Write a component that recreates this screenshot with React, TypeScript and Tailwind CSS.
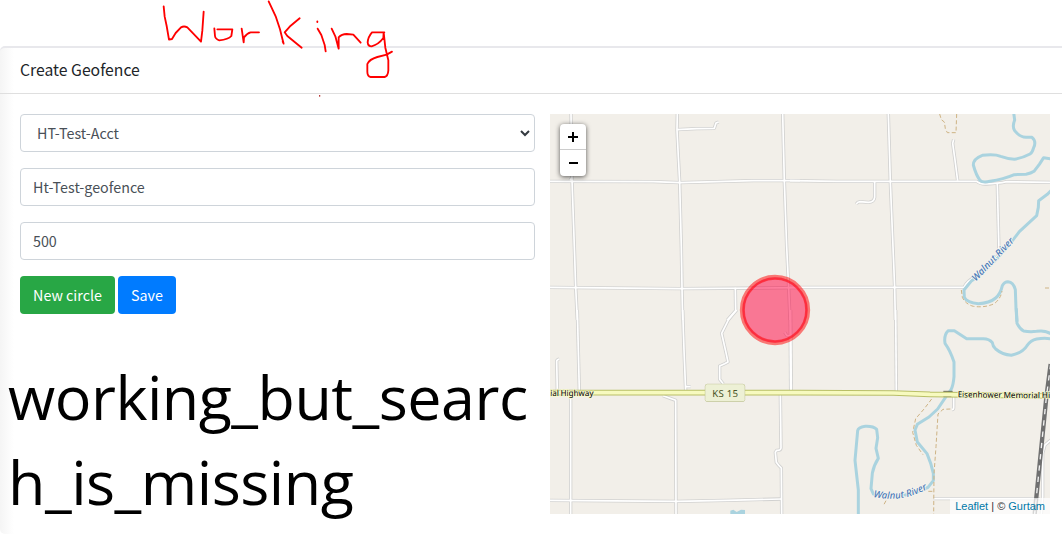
type Layer = { transform: string; roads: string[]; rivers: string[]; trails: string[] };

// One entry per map tile, at three units to a pixel
const layers: Layer[] = [
  {
    transform: "translate(-30 -42)",
    roads: [
      "M93 42L96 240L103 440L107 560L112 660",
      "M412 42L411 90L415 170L419 246L424 440L426 565L428 660",
      "M411 89L470 86L523 85L528 69L536 66",
      "M728 42L733 242L740 440L746 563L750 660",
      "M30 244L340 245L420 248L640 242L780 242",
      "M30 562L420 566L780 563",
      "M96 232L90 241",
      "M586 563L587 632L562 660",
    ],
    rivers: [],
    trails: [],
  },
  {
    transform: "translate(720 -42)",
    roads: [
      "M0 242L140 244L560 244Q570 253 590 252Q625 251 650 245L780 247",
      "M295 42L301 245L309 440L314 563L316 660",
      "M254 245V292Q252 307 235 307L210 305Q202 306 199 312",
      "M491 118L488 130L495 180L503 242",
      "M622 252L627 458",
      "M0 562L522 562Q532 542 554 532L590 507L627 462",
    ],
    rivers: [
      "M671 38L674 60Q666 80 674 92Q690 112 708 112H726Q740 124 731 143Q727 158 720 162Q700 173 673 178Q655 177 632 169Q615 162 577 166Q550 176 550 195Q558 225 570 241Q578 249 600 244Q640 238 673 224Q695 223 708 223Q723 220 732 214L748 193L761 173L785 177",
      "M785 270L772 283L746 302L745 322L740 347L688 395L665 425L620 477L575 521L545 542L522 570L523 592Q530 607 565 611Q598 610 617 594Q632 581 637 557Q643 545 654 545Q670 546 676 569L678 625L681 665",
    ],
    trails: ["M449 42L454 59L463 66L466 86L472 98H498L500 42", "M514 570L517 592Q526 612 550 619Q584 624 613 611Q633 595 636 573", "M765 564H785"],
  },
  {
    transform: "translate(-30 588)",
    roads: [
      "M112 0L118 244",
      "M428 0L432 120L437 242M437 230H452",
      "M52 244L50 154Q50 149 58 147",
      "M92 262V612",
      "M369 257L407 271L408 612",
      "M590 0L565 30L545 70L558 128L564 156L554 161L539 168V208L550 222",
      "M750 0L752 244",
      "M721 250L723 414Q722 422 710 421L706 427L709 457Q715 466 724 474L725 612",
      "M30 571L410 574L560 571L724 567",
      "M734 67L741 77H752",
    ],
    rivers: [],
    trails: [],
  },
  {
    transform: "translate(720 588)",
    roads: ["M2 0L4 244", "M317 0L319 244", "M491 255V292Q491 299 486 299", "M785 388L765 405L758 430V560L754 612", "M430 566H750"],
    rivers: [
      "M679 -5L681 40Q690 57 701 63Q720 67 740 64Q766 59 785 73",
      "M785 87Q765 83 740 87Q722 91 711 107Q698 128 664 136Q637 134 617 117Q608 109 607 98Q598 86 580 86H530L493 62H475Q461 75 465 100Q481 122 492 156V200Q490 226 483 239L468 260L443 297L417 321L382 343L375 360L382 396L411 431Q424 461 430 490V512L414 532Q370 554 330 557Q280 555 250 552L243 536L247 490Q251 466 265 445L258 415L263 383L260 358Q250 348 226 349Q205 352 203 362L195 451L205 540V617",
    ],
    trails: ["M425 267L403 296L377 326L368 367L379 406L399 434", "M481 297L459 298L444 312L438 410L432 492L431 612", "M415 544H431", "M288 572L281 585"],
  },
];

function GeofenceMap() {
  return (
    <svg className="block h-full w-full" viewBox="0 0 1500 1200" fill="none">
      <path d="M0 0H1500V1200H0Z" fill="#f2efe9" />
      {layers.map((layer) => (
        <g key={layer.transform} transform={layer.transform} stroke="#d1d1d0" strokeWidth="10" strokeLinejoin="round">
          {layer.roads.map((d) => <path key={d} d={d} />)}
        </g>
      ))}
      {layers.map((layer) => (
        <g key={layer.transform} transform={layer.transform} stroke="#fff" strokeWidth="5" strokeLinejoin="round">
          {layer.roads.map((d) => <path key={d} d={d} />)}
        </g>
      ))}
      {layers.map((layer) => (
        <g key={layer.transform} transform={layer.transform}>
          <g stroke="#aad3df" strokeWidth="9" strokeLinejoin="round">
            {layer.rivers.map((d) => <path key={d} d={d} />)}
          </g>
          <g stroke="#ceb384" strokeWidth="3" strokeDasharray="12 7">
            {layer.trails.map((d) => <path key={d} d={d} />)}
          </g>
        </g>
      ))}
      <path d="M541 1200V1190L550 1187L560 1194L573 1187L585 1188V1200Z" fill="#aad3df" />

      {/* Highway and railway */}
      <path d="M0 836L750 836L1030 837L1140 841L1500 846" stroke="#b9bf67" strokeWidth="17" />
      <path d="M0 836L750 836L1030 837L1140 841L1500 846" stroke="#f7fabf" strokeWidth="11" />
      <path d="M1180 832H1208" stroke="#6e7050" strokeWidth="3" />
      <path d="M1180 848H1204" stroke="#a0a36f" strokeWidth="2" />
      <path d="M1502 750L1489 850L1454 1200" stroke="#707070" strokeWidth="13" />
      <path d="M1502 750L1489 850L1454 1200" stroke="#f2f2f2" strokeWidth="4" strokeDasharray="16 18" />

      <g
        className="font-['Noto_Sans'] [text-rendering:geometricPrecision]"
        paintOrder="stroke"
        strokeLinejoin="round"
      >
        <g fill="#1c1c1c" stroke="#f8facb" strokeWidth="5" fontSize="25" fontWeight="500">
          <text x="1" y="845" textLength="130">ial Highway</text>
          <text x="1223" y="850" textLength="247" transform="rotate(0.7 1223 850)">Eisenhower Memorial</text>
          <text x="1475" y="853">Hi</text>
        </g>
        <rect x="466" y="811" width="118" height="51" rx="5" fill="#edf0d5" stroke="#b9bd8b" strokeWidth="3" />
        <text x="487" y="848" textLength="77" fontSize="29" fill="#4b5426">KS 15</text>
        <g fill="#4a7ab8" stroke="#f5f4ef" strokeWidth="5" fontSize="29" fontStyle="italic" fontWeight="500">
          <text x="1277" y="503" textLength="168" transform="rotate(-46 1277 503)">Walnut River</text>
          <path id="river-label" d="M970 1149Q1060 1168 1140 1120" stroke="none" fill="none" />
          <text><textPath href="#river-label" textLength="168">Walnut River</textPath></text>
        </g>
      </g>

      {/* Geofence circle */}
      <circle cx="675" cy="588" r="98" fill="#ff003f" fillOpacity=".5" />
      <circle cx="675" cy="588" r="98" stroke="#ff0000" strokeOpacity=".5" strokeWidth="15" />
      <circle cx="675" cy="588" r="95" stroke="#ff1a2e" strokeOpacity=".4" strokeWidth="6" />
    </svg>
  );
}

const field =
  "flex h-[38px] w-full items-center rounded border border-[#ced4da] bg-white px-3 text-[14.3px] text-[#495057]";

export default function App() {
  return (
    <div className="relative h-[534px] w-[1062px] overflow-hidden bg-white pt-[46px] font-['Noto_Sans_CJK_SC',sans-serif]">
      <section className="h-[488px] rounded-l-[5px] border-t-2 border-[#e8e8ec] bg-[linear-gradient(to_right,#f5f5f5,#fff_14px)]">
        <header className="flex h-[46px] items-center border-b border-[#dfdfdf] px-5 text-[#212529]">
          <h1 className="-mt-0.5 text-[15.75px] leading-6">Create Geofence</h1>
        </header>
        <div className="flex pt-5 pl-5">
          <div className="w-[515px]">
            <div className="flex flex-col gap-4">
              <div className={`${field} justify-between pl-4 pr-[3px]`}>
                <span>HT-Test-Acct</span>
                <svg className="h-3 w-3" viewBox="0 0 12 12" fill="none" stroke="#343a40" strokeWidth="2">
                  <path d="M2 4L6 8L10 4" />
                </svg>
              </div>
              <div className={field}>Ht-Test-geofence</div>
              <div className={field}>500</div>
              <div className="flex gap-[3px] text-[14.3px] text-white">
                <button className="h-[38px] w-[95px] rounded bg-[#28a745]">New circle</button>
                <button className="h-[38px] w-[58px] rounded bg-[#007bff]">Save</button>
              </div>
            </div>
            <p className="mt-10 -ml-3 w-[540px] font-['Open_Sans'] text-[61px] leading-[85px] tracking-[-0.5px] text-black">
              working_but_searc
              <br />
              h_is_missing
            </p>
          </div>
          <div className="relative ml-[15px] h-[400px] w-[500px] overflow-hidden">
            <GeofenceMap />
            <div className="absolute top-[10px] left-[10px] w-[26px] rounded bg-white shadow-[0_1px_5px_rgba(0,0,0,0.65)]">
              <button className="flex h-[26px] w-full items-center justify-center border-b border-[#ccc]">
                <svg className="h-[10px] w-[10px]" viewBox="0 0 10 10" stroke="#000" strokeWidth="2">
                  <path d="M0 5H10M5 0V10" />
                </svg>
              </button>
              <button className="flex h-[26px] w-full items-center justify-center">
                <svg className="h-[10px] w-[10px]" viewBox="0 0 10 10" stroke="#000" strokeWidth="2">
                  <path d="M1 5H10" />
                </svg>
              </button>
            </div>
            <div className="absolute right-0 bottom-0 bg-white/70 px-[5px] font-['Liberation_Sans'] text-[11px] leading-4 text-[#333]">
              <a className="text-[#0078a8]">Leaflet</a> | © <a className="text-[#0078a8]">Gurtam</a>
            </div>
          </div>
        </div>
      </section>

      {/* Pen annotation over the card */}
      <svg
        className="pointer-events-none absolute top-0 left-0 h-[100px] w-[400px]"
        viewBox="0 0 1200 300"
        fill="none"
        stroke="#f00"
        strokeWidth="5.5"
        strokeLinecap="round"
        strokeLinejoin="round"
      >
        <path d="M491 19L494 50L500 78L507 119L516 117L527 99L543 82Q552 77 562 82L603 125L607 92L611 35" />
        <path d="M652 88H697L694 108Q685 118 658 121Q646 117 645 108L643 85" />
        <path d="M725 86L731 127L732 112Q742 99 752 97H777" />
        <path d="M806 4L827 49L840 88L847 116L851 131L848 125M899 55L872 77L854 97L862 108L905 143" />
        <path d="M952 64V66M953 86L964 105L974 135L977 154" />
        <path d="M995 86L1006 109L1016 146V112Q1025 102 1040 102L1060 104L1082 128" />
        <path d="M1153 97H1116Q1104 111 1103 127Q1104 139 1115 139Q1136 133 1150 114L1151 97L1156 143L1165 181V211Q1164 228 1154 231H1112Q1102 229 1102 215V192Q1108 178 1132 171L1160 164L1176 155" />
        <path d="M959 287V288" stroke="#a11" strokeWidth="4" />
      </svg>
    </div>
  );
}
